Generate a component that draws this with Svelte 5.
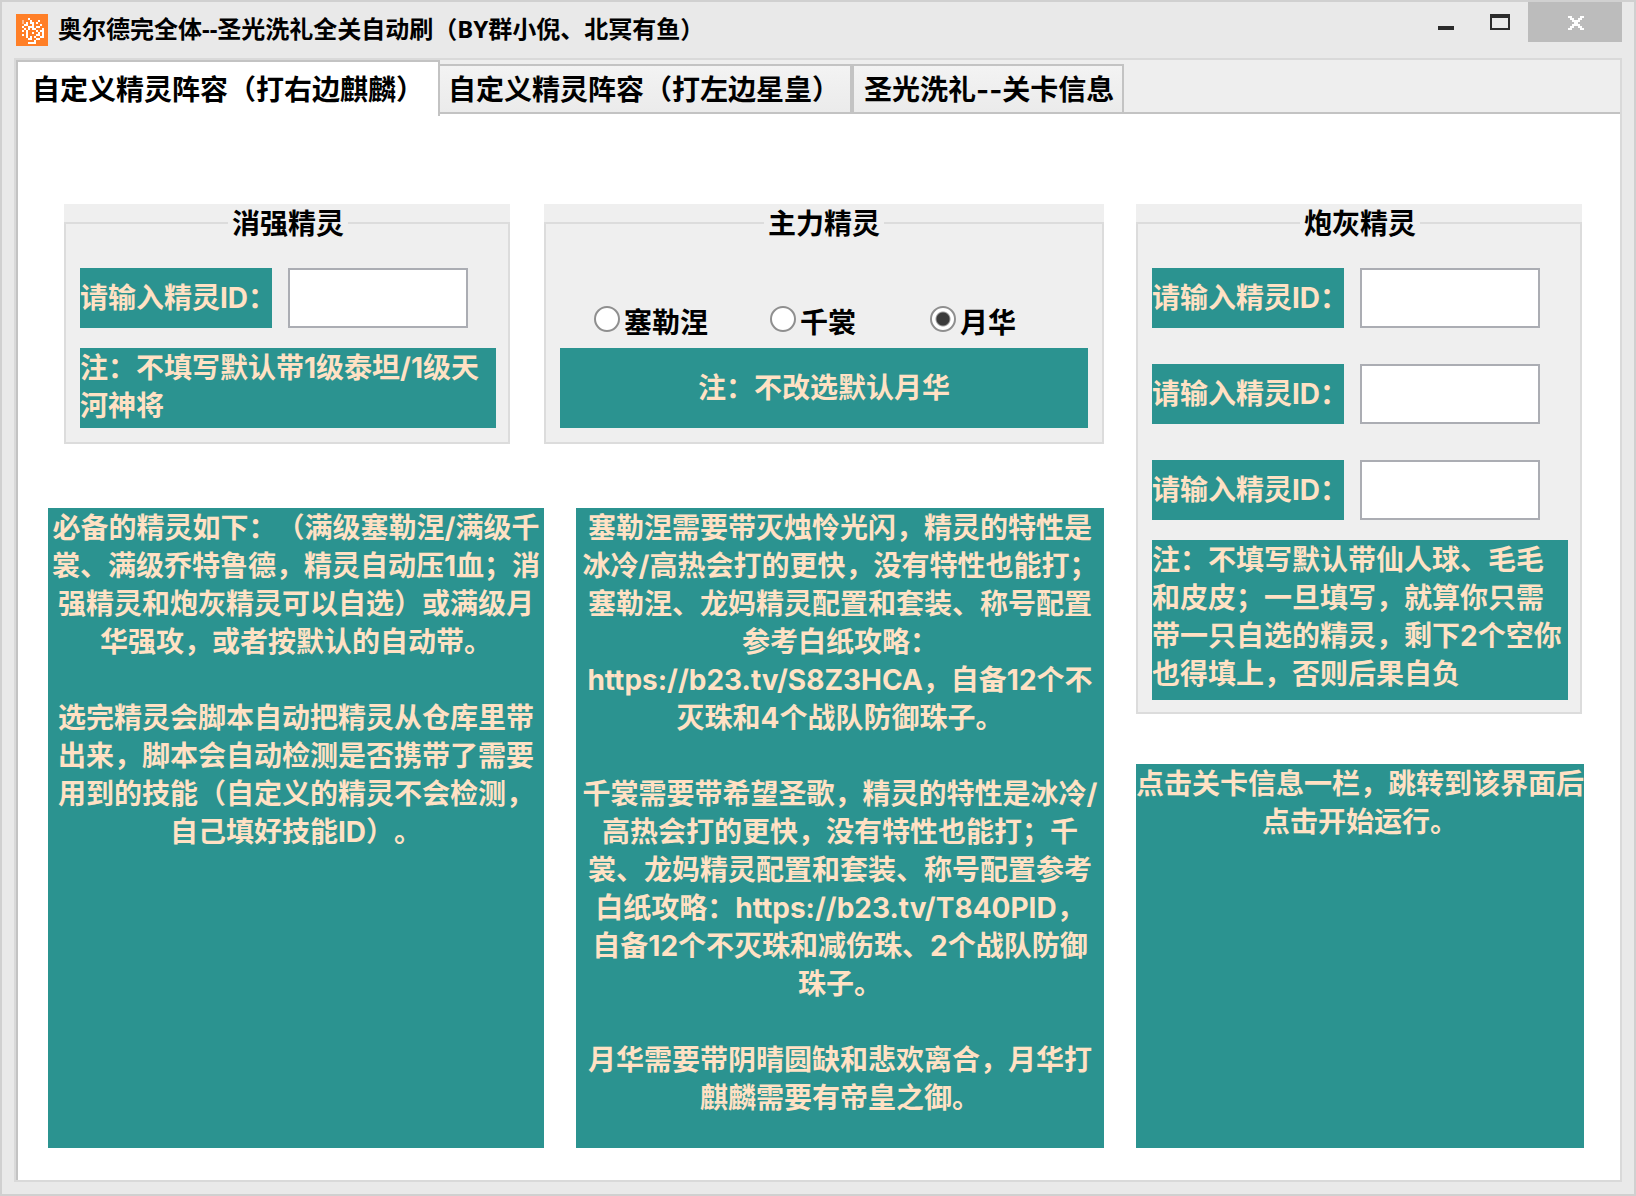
<script>
	const tabs = [
		'自定义精灵阵容（打右边麒麟）',
		'自定义精灵阵容（打左边星皇）',
		'圣光洗礼--关卡信息'
	];
	const mains = ['塞勒涅', '千裳', '月华'];

	let activeTab = 0;
	let main = '月华';
	let strongId = '';
	let fodderIds = ['', '', ''];

	// one row per string, '#' is a white pixel and '+' a faint one
	const logo = [
		'                ',
		'                ',
		'      #         ',
		'   +   #   #    ',
		'   + # ## #     ',
		'    ##  #   #   ',
		'   #  ### ##    ',
		'    # # ##   #  ',
		'   # #    # ##  ',
		'     #  #  # #  ',
		'   # #    ## #  ',
		'     # # #  ##  ',
		'      ##  ##    ',
		'         #      ',
		'      ####      ',
		'                '
	];
	const pixels = logo.flatMap((row, y) =>
		[...row].map((c, x) => ({ x, y, c })).filter((p) => p.c !== ' ')
	);

	const needText = `必备的精灵如下：（满级塞勒涅/满级千
裳、满级乔特鲁德，精灵自动压1血；消
强精灵和炮灰精灵可以自选）或满级月
华强攻，或者按默认的自动带。

选完精灵会脚本自动把精灵从仓库里带
出来，脚本会自动检测是否携带了需要
用到的技能（自定义的精灵不会检测，
自己填好技能ID）。`;

	const guideText = `塞勒涅需要带灭烛怜光闪，精灵的特性是
冰冷/高热会打的更快，没有特性也能打；
塞勒涅、龙妈精灵配置和套装、称号配置
参考白纸攻略：
https://b23.tv/S8Z3HCA，自备12个不
灭珠和4个战队防御珠子。

千裳需要带希望圣歌，精灵的特性是冰冷/
高热会打的更快，没有特性也能打；千
裳、龙妈精灵配置和套装、称号配置参考
白纸攻略：https://b23.tv/T840PID，
自备12个不灭珠和减伤珠、2个战队防御
珠子。

月华需要带阴晴圆缺和悲欢离合，月华打
麒麟需要有帝皇之御。`;

	const startText = `点击关卡信息一栏，跳转到该界面后
点击开始运行。`;
</script>

<div class="window">
	<header class="titlebar">
		<svg class="logo" viewBox="0 0 16 16" shape-rendering="crispEdges" aria-hidden="true">
			<rect width="16" height="16" fill="#ff7f27" />
			{#each pixels as p}
				<rect x={p.x} y={p.y} width="1" height="1" fill={p.c === '#' ? '#fff' : '#ffb98a'} />
			{/each}
		</svg>
		<h1>奥尔德完全体--圣光洗礼全关自动刷（BY群小倪、北冥有鱼）</h1>
		<div class="controls">
			<button class="control" aria-label="最小化">
				<svg width="20" height="16" viewBox="0 0 20 16"><rect x="2" y="12" width="16" height="4" fill="#2b2b2b" /></svg>
			</button>
			<button class="control" aria-label="最大化">
				<svg width="20" height="16" viewBox="0 0 20 16"><path d="M0 0h20v16H0zM2 4v10h16V4z" fill="#2b2b2b" fill-rule="evenodd" /></svg>
			</button>
			<button class="control close" aria-label="关闭">
				<svg width="16" height="14" viewBox="0 0 8 7" shape-rendering="crispEdges">
					<path d="M0 0h2v1H0zM6 0h2v1H6zM1 1h2v1H1zM5 1h2v1H5zM2 2h4v1H2zM3 3h2v1H3zM2 4h4v1H2zM1 5h2v1H1zM5 5h2v1H5zM0 6h2v1H0zM6 6h2v1H6z" fill="#fff" />
				</svg>
			</button>
		</div>
	</header>

	<div class="frame">
		<div class="tabs" role="tablist">
			{#each tabs as tab, i}
				<button
					class="tab"
					class:active={activeTab === i}
					role="tab"
					aria-selected={activeTab === i}
					on:click={() => (activeTab = i)}>{tab}</button
				>
			{/each}
		</div>

		<main class="page">
			<section class="column">
				<div class="group strong">
					<fieldset>
						<legend>消强精灵</legend>
						<div class="field">
							<label for="strong">请输入精灵ID：</label>
							<input id="strong" type="text" bind:value={strongId} />
						</div>
						<p class="note">{'注：不填写默认带1级泰坦/1级天\n河神将'}</p>
					</fieldset>
				</div>
				<p class="panel">{needText}</p>
			</section>

			<section class="column">
				<div class="group main">
					<fieldset>
						<legend>主力精灵</legend>
						<div class="radios">
							{#each mains as name}
								<label class="radio">
									<input type="radio" name="main" value={name} bind:group={main} />
									{name}
								</label>
							{/each}
						</div>
						<p class="note centered">注：不改选默认月华</p>
					</fieldset>
				</div>
				<p class="panel">{guideText}</p>
			</section>

			<section class="column">
				<div class="group fodder">
					<fieldset>
						<legend>炮灰精灵</legend>
						<div class="fields">
							{#each fodderIds as id, i}
								<div class="field">
									<label for="fodder-{i}">请输入精灵ID：</label>
									<input id="fodder-{i}" type="text" bind:value={fodderIds[i]} />
								</div>
							{/each}
						</div>
						<p class="note tall">{'注：不填写默认带仙人球、毛毛\n和皮皮；一旦填写，就算你只需\n带一只自选的精灵，剩下2个空你\n也得填上，否则后果自负'}</p>
					</fieldset>
				</div>
				<p class="panel">{startText}</p>
			</section>
		</main>
	</div>
</div>

<style>
	:global(body) {
		margin: 0;
	}

	.window,
	.window * {
		box-sizing: border-box;
	}

	.window {
		display: flex;
		flex-direction: column;
		min-height: 100vh;
		padding: 0 12px 12px;
		border: 2px solid #d0d0d0;
		background: #e9e9e9;
		color: #000;
		font: 700 28px/38px Inter, 'Noto Sans CJK SC', sans-serif;
		text-spacing-trim: space-all;
	}

	button,
	input {
		margin: 0;
		font: inherit;
		color: inherit;
	}

	.titlebar {
		display: flex;
		align-items: flex-start;
		height: 56px;
	}

	.logo {
		width: 32px;
		height: 32px;
		margin: 12px 10px 0 2px;
	}

	h1 {
		flex: 1;
		margin: 8px 0 0;
		font-family: 'Noto Sans', 'Noto Sans CJK SC', sans-serif;
		font-size: 24px;
		white-space: nowrap;
	}

	.controls {
		display: flex;
	}

	.control {
		display: flex;
		align-items: flex-start;
		justify-content: center;
		width: 54px;
		height: 40px;
		padding: 12px 2px 0 0;
		border: none;
		background: none;
	}

	.close {
		width: 94px;
		padding: 14px 0 0 2px;
		background: #bcbcbc;
	}

	.frame {
		flex: 1;
		display: flex;
		flex-direction: column;
		border: 2px solid #d9d9d9;
		background: #eee;
	}

	.tabs {
		display: flex;
		align-items: flex-end;
		height: 54px;
		border-bottom: 2px solid #c3c3c3;
	}

	.tab {
		height: 48px;
		padding: 2px 10px 0 8px;
		border: 2px solid #c3c3c3;
		border-width: 2px 2px 0 0;
		background: linear-gradient(#f3f3f3, #ebebeb);
		white-space: nowrap;
	}

	.tab:last-child {
		padding: 2px 8px 0 10px;
		border-left-width: 2px;
	}

	.tab.active {
		position: relative;
		height: 56px;
		margin-bottom: -4px;
		padding: 2px 14px 0;
		border-left-width: 2px;
		background: #fff;
	}

	.page {
		flex: 1;
		display: grid;
		grid-template-columns: 496fr 528fr 448fr;
		gap: 32px;
		padding: 90px 36px 32px 30px;
		border-left: 2px solid #c3c3c3;
		background: #fff;
	}

	.column {
		display: flex;
		flex-direction: column;
		min-width: 0;
	}

	.group {
		background: #efefef;
	}

	.strong {
		margin: 0 34px 64px 16px;
	}

	.main {
		margin: 0 0 64px -32px;
	}

	.fodder {
		margin: 0 2px 50px 0;
	}

	fieldset {
		min-width: 0;
		margin: 0;
		padding: 26px 12px 14px 14px;
		border: 2px solid #dcdcdc;
	}

	.main fieldset {
		padding-right: 14px;
	}

	.fodder fieldset {
		padding-bottom: 12px;
	}

	legend {
		margin: 0 auto;
		padding: 2px 4px 0;
		line-height: 36px;
	}

	.fields {
		display: flex;
		flex-direction: column;
		gap: 36px;
	}

	.field {
		display: flex;
		gap: 16px;
	}

	.field label {
		width: 192px;
		height: 60px;
		line-height: 60px;
		background: #2b9390;
		color: #ffe1c4;
		white-space: nowrap;
	}

	.field input {
		width: 180px;
		height: 60px;
		padding: 0 8px;
		border: 2px solid #abadb3;
		border-radius: 0;
		background: #fff;
	}

	.note {
		min-height: 80px;
		margin: 20px 0 0;
		padding-top: 1px;
		background: #2b9390;
		color: #ffe1c4;
		white-space: pre;
	}

	.note.centered {
		margin-top: 0;
		padding-top: 0;
		line-height: 80px;
		text-align: center;
	}

	.note.tall {
		min-height: 160px;
	}

	.radios {
		display: grid;
		grid-template-columns: 176px 160px auto;
		padding: 36px 0 6px 34px;
	}

	.radio {
		display: flex;
		align-items: center;
		gap: 4px;
		white-space: nowrap;
	}

	.radio input {
		appearance: none;
		width: 26px;
		height: 26px;
		margin-bottom: 8px;
		border: 2px solid #8f8f8f;
		border-radius: 50%;
		background: #fff;
	}

	.radio input:checked {
		background: radial-gradient(circle, #3c3c3c 6px, #fff 8px);
	}

	.panel {
		flex: 1;
		margin: 0;
		padding-top: 1px;
		background: #2b9390;
		color: #ffe1c4;
		text-align: center;
		white-space: pre;
	}
</style>
